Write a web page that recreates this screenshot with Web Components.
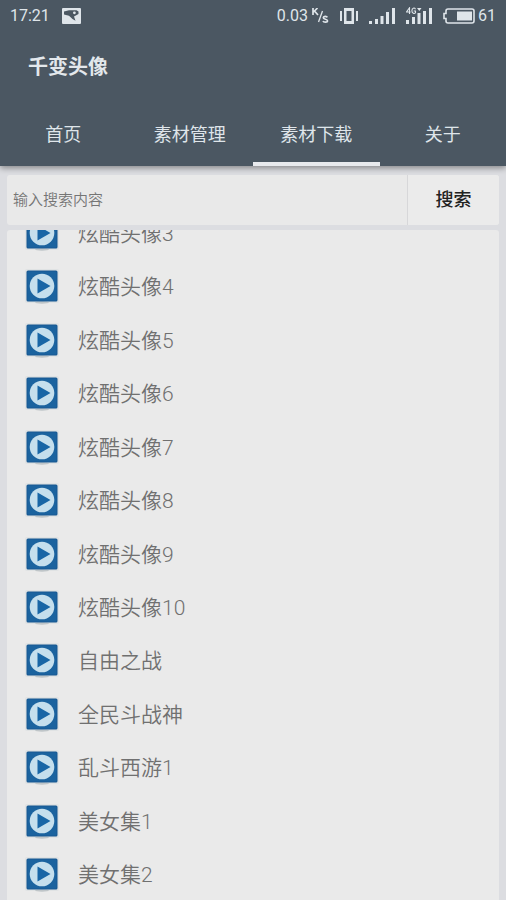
<!DOCTYPE html>
<html lang="zh-CN">
<head>
<meta charset="utf-8">
<meta name="viewport" content="width=device-width, initial-scale=1">
<title>千变头像</title>
<style>
  html, body { height: 100%; }
  body {
    margin: 0;
    font-family: Roboto, "Noto Sans CJK SC", sans-serif;
    background: #dcdde1;
    overflow: hidden;
  }
</style>
</head>
<body>
<avatar-app></avatar-app>

<script>
const define = (name, html, setup) => {
  const template = document.createElement('template');
  template.innerHTML = html;
  customElements.define(name, class extends HTMLElement {
    constructor() {
      super();
      this.attachShadow({ mode: 'open' }).append(template.content.cloneNode(true));
    }
    connectedCallback() { if (setup) setup(this, this.shadowRoot); }
  });
};

define('status-bar', `
  <style>
    :host { display: flex; align-items: center; height: 32px; padding: 0 10px; color: #dfe5ea; font-size: 16px; line-height: 20px; }
    svg { display: block; fill: currentColor; flex: none; }
    .left, .right { display: flex; align-items: center; }
    .left { gap: 12px; }
    .right { margin-left: auto; }
    .speed { margin-right: 4px; }
    .unit { margin-right: 11px; }
    .vibrate { margin-right: 11px; }
    .signal { margin-right: 11px; }
    .battery { margin-right: 3px; }
  </style>
  <div class="left">
    <span>17:21</span>
    <svg width="19" height="16" viewBox="0 0 19 16" aria-label="图片"><path fill-rule="evenodd" d="M1 0h17a1 1 0 0 1 1 1v14a1 1 0 0 1-1 1H1a1 1 0 0 1-1-1V1a1 1 0 0 1 1-1zM2 3.500v3l5 1.200 3.500 3.300 3 1.800-1.500-4.300 4.500-2.500V3.500l-2-1.300H7zM11 4.800a1.400 1.400 0 1 0 2.800 0a1.400 1.400 0 1 0-2.800 0z"/></svg>
  </div>
  <div class="right">
    <span class="speed">0.03</span>
    <svg class="unit" width="17" height="16" viewBox="0 0 17 16" role="img" aria-label="K/s"><g fill="none" stroke="currentColor" stroke-width="1.700"><path d="M1 0v7M5.500 0L1.500 4M2.500 3L6 7"/><path d="M10.500 3L6.500 14" stroke-width="1.300"/><path d="M15.300 9.400c-.6-1.400-4-1.400-4 .4 0 1.900 4.200 1 4.200 3 0 1.900-3.900 1.800-4.500.2"/></g></svg>
    <svg class="vibrate" width="18" height="18" viewBox="0 0 18 18" role="img" aria-label="振动"><path fill-rule="evenodd" d="M4 1h10v16H4zM6.500 4v10h5V4zM0 4h2v10H0zM16 4h2v10h-2z"/></svg>
    <svg class="signal" width="26" height="18" viewBox="0 0 26 18" role="img" aria-label="信号"><path d="M0 14h3v3H0zM6 12h3v5H6zM11.500 9h3v8h-3zM17 5h3v12h-3zM23 1h3v16h-3z"/></svg>
    <svg class="signal" width="26" height="18" viewBox="0 0 26 18" role="img" aria-label="4G 信号"><path d="M0 13h3v4H0zM6 10h3v7H6zM11.500 6h3v11h-3zM17 4h3v13h-3zM23 1h3v16h-3zM11 1h4.500l-2.200 3z"/><path d="M3.500 7V.8L.5 5H4.600M9.500 2.200C8.500.3 5.900.8 5.900 3.700S8.500 7 9.500 5.700V4H7.700" fill="none" stroke="currentColor" stroke-width="1.100"/></svg>
    <svg class="battery" width="32" height="16" viewBox="0 0 32 16" role="img" aria-label="电量"><path d="M5 1h24a2 2 0 0 1 2 2v10a2 2 0 0 1-2 2H5a2 2 0 0 1-2-2v-2.500H1v-5h2V3a2 2 0 0 1 2-2z" fill="none" stroke="currentColor" stroke-width="1.600"/><path d="M14 3.500h15v9H14z"/></svg>
    <span>61</span>
  </div>
`);

define('app-tab', `
  <style>
    :host { display: flex; flex: 1; }
    button { flex: 1; height: 66px; padding: 7px 0 0; border: 0; border-bottom: 4px solid transparent; background: none; color: #dfe5ea; font: 400 18px/24px Roboto, "Noto Sans CJK SC", sans-serif; }
    :host([selected]) button { border-color: #e8eaed; }
  </style>
  <button type="button" role="tab"><slot></slot></button>
`, (host, root) => root.querySelector('button').setAttribute('aria-selected', host.hasAttribute('selected')));

define('app-header', `
  <style>
    :host { display: block; position: relative; z-index: 1; background: #4b5762; box-shadow: 0 2px 6px rgba(0,0,0,.4); }
    h1 { margin: 0; padding: 20px 28px 18px; font-size: 20px; line-height: 30px; font-weight: 700; color: #e3e8ec; }
    nav { display: flex; }
  </style>
  <status-bar></status-bar>
  <h1><slot></slot></h1>
  <nav role="tablist">
    <app-tab>首页</app-tab><app-tab>素材管理</app-tab><app-tab selected>素材下载</app-tab><app-tab>关于</app-tab>
  </nav>
`);

define('search-bar', `
  <style>
    :host { display: block; }
    form { display: flex; height: 50px; background: #e9e9e9; border-radius: 3px; }
    input { flex: 1; min-width: 0; padding: 0 6px; border: 0; outline: 0; background: none; color: #333; font: 350 15px/24px Roboto, "Noto Sans CJK SC", sans-serif; }
    input::placeholder { color: #757575; opacity: 1; }
    button { width: 92px; padding: 0; border: 0; border-left: 1px solid #d7d7d9; border-radius: 0 3px 3px 0; background: #ebebeb; color: #222; font: 500 18px/24px Roboto, "Noto Sans CJK SC", sans-serif; }
  </style>
  <form><input type="text" aria-label="输入搜索内容" placeholder="输入搜索内容"><button type="button">搜索</button></form>
`);

define('play-icon', `
  <style>:host { display: block; } svg { display: block; }</style>
  <svg width="36" height="38" viewBox="0 0 36 38" aria-hidden="true">
    <rect x="1" y="2" width="34" height="34" rx="2" fill="#dfe2e3"/>
    <ellipse cx="18" cy="35.500" rx="7" ry="1.200" fill="#bfc5c8"/>
    <rect x="2.500" y="3.500" width="31" height="31" rx="1.500" fill="#185892"/>
    <rect x="3.500" y="4.500" width="29" height="29" rx="1" fill="#1b639f"/>
    <circle cx="18" cy="19" r="12.300" fill="#c5dfed"/>
    <path d="M13.500 11.500v15L26.500 19z" fill="#1866a6"/>
  </svg>
`);

define('material-item', `
  <style>
    :host { display: flex; flex: 1 0 auto; align-items: center; gap: 18px; min-height: 53px; padding: 0 17px; color: #707070; font-size: 21px; line-height: 30px; font-weight: 350; }
    span { padding-top: 2px; }
  </style>
  <play-icon></play-icon><span><slot></slot></span>
`);

define('material-list', `
  <style>
    :host { display: flex; flex-direction: column; min-height: 0; overflow: hidden; border-radius: 3px 3px 0 0; background: #eaeaea; }
    .rows { display: flex; flex: 1 0 auto; flex-direction: column; margin: -24px 0 -1px; }
  </style>
  <div class="rows" role="list"></div>
`, (host, root) => {
  const names = ['炫酷头像3', '炫酷头像4', '炫酷头像5', '炫酷头像6', '炫酷头像7', '炫酷头像8', '炫酷头像9', '炫酷头像10', '自由之战', '全民斗战神', '乱斗西游1', '美女集1', '美女集2'];
  root.querySelector('.rows').replaceChildren(...names.map(name => {
    const item = document.createElement('material-item');
    item.setAttribute('role', 'listitem');
    item.textContent = name;
    return item;
  }));
});

define('avatar-app', `
  <style>
    :host { display: flex; flex-direction: column; height: 100vh; }
    main { display: flex; flex: 1; flex-direction: column; gap: 5px; min-height: 0; padding: 9px 7px 0; }
    material-list { flex: 1; }
  </style>
  <app-header>千变头像</app-header>
  <main><search-bar></search-bar><material-list></material-list></main>
`);
</script>
</body>
</html>
